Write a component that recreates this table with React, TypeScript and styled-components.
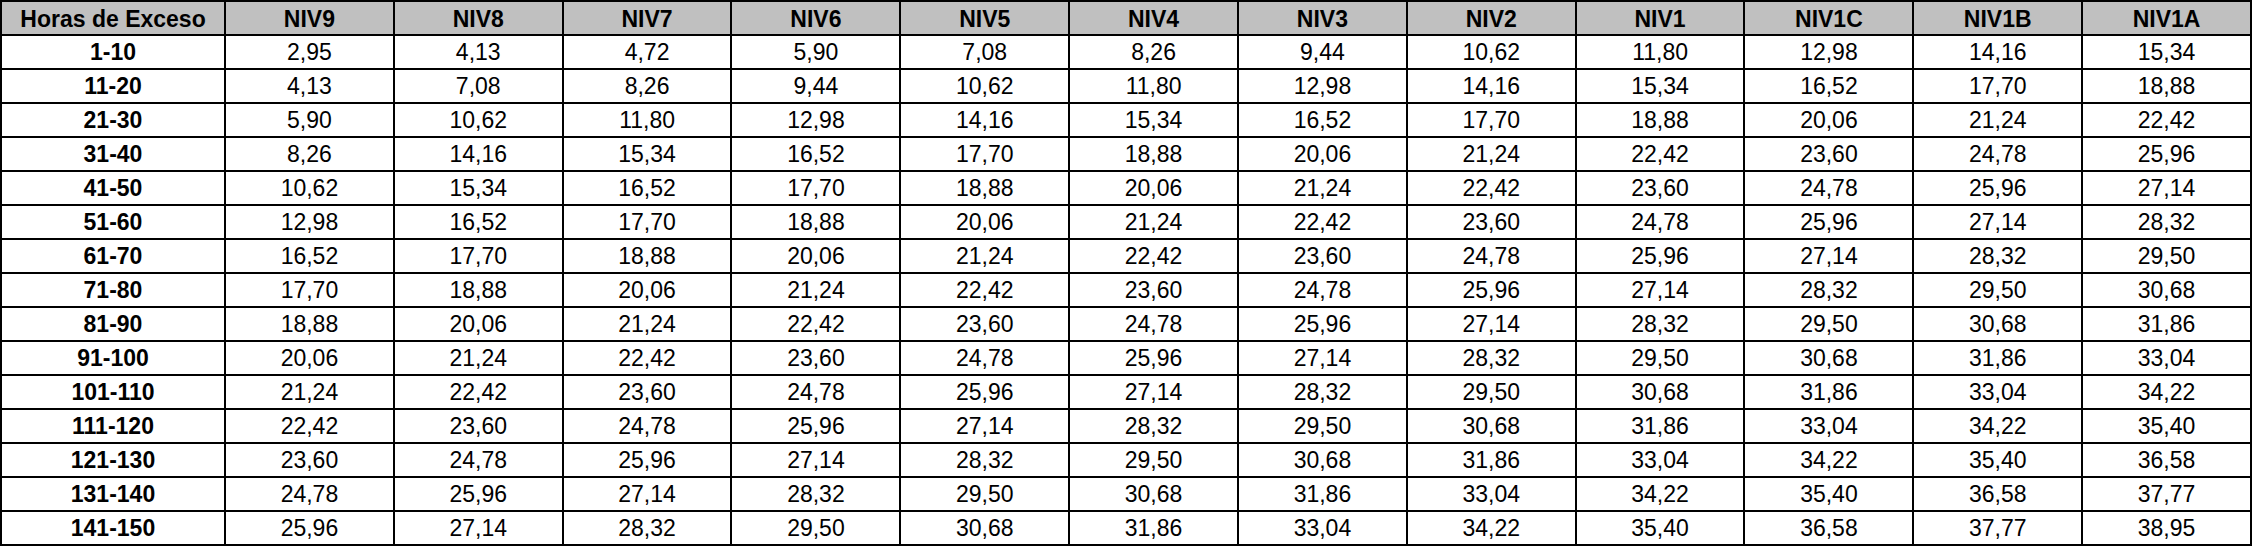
import styled, { createGlobalStyle } from 'styled-components';

const GlobalStyle = createGlobalStyle`
  html, body {
    margin: 0;
    padding: 0;
    background: #ffffff;
  }
`;

const LEVELS = ['NIV9', 'NIV8', 'NIV7', 'NIV6', 'NIV5', 'NIV4', 'NIV3', 'NIV2', 'NIV1', 'NIV1C', 'NIV1B', 'NIV1A'];

// tarifa por hora de exceso, una fila por tramo
const ROWS: [string, string[]][] = [
  ['1-10', ['2,95', '4,13', '4,72', '5,90', '7,08', '8,26', '9,44', '10,62', '11,80', '12,98', '14,16', '15,34']],
  ['11-20', ['4,13', '7,08', '8,26', '9,44', '10,62', '11,80', '12,98', '14,16', '15,34', '16,52', '17,70', '18,88']],
  ['21-30', ['5,90', '10,62', '11,80', '12,98', '14,16', '15,34', '16,52', '17,70', '18,88', '20,06', '21,24', '22,42']],
  ['31-40', ['8,26', '14,16', '15,34', '16,52', '17,70', '18,88', '20,06', '21,24', '22,42', '23,60', '24,78', '25,96']],
  ['41-50', ['10,62', '15,34', '16,52', '17,70', '18,88', '20,06', '21,24', '22,42', '23,60', '24,78', '25,96', '27,14']],
  ['51-60', ['12,98', '16,52', '17,70', '18,88', '20,06', '21,24', '22,42', '23,60', '24,78', '25,96', '27,14', '28,32']],
  ['61-70', ['16,52', '17,70', '18,88', '20,06', '21,24', '22,42', '23,60', '24,78', '25,96', '27,14', '28,32', '29,50']],
  ['71-80', ['17,70', '18,88', '20,06', '21,24', '22,42', '23,60', '24,78', '25,96', '27,14', '28,32', '29,50', '30,68']],
  ['81-90', ['18,88', '20,06', '21,24', '22,42', '23,60', '24,78', '25,96', '27,14', '28,32', '29,50', '30,68', '31,86']],
  ['91-100', ['20,06', '21,24', '22,42', '23,60', '24,78', '25,96', '27,14', '28,32', '29,50', '30,68', '31,86', '33,04']],
  ['101-110', ['21,24', '22,42', '23,60', '24,78', '25,96', '27,14', '28,32', '29,50', '30,68', '31,86', '33,04', '34,22']],
  ['111-120', ['22,42', '23,60', '24,78', '25,96', '27,14', '28,32', '29,50', '30,68', '31,86', '33,04', '34,22', '35,40']],
  ['121-130', ['23,60', '24,78', '25,96', '27,14', '28,32', '29,50', '30,68', '31,86', '33,04', '34,22', '35,40', '36,58']],
  ['131-140', ['24,78', '25,96', '27,14', '28,32', '29,50', '30,68', '31,86', '33,04', '34,22', '35,40', '36,58', '37,77']],
  ['141-150', ['25,96', '27,14', '28,32', '29,50', '30,68', '31,86', '33,04', '34,22', '35,40', '36,58', '37,77', '38,95']],
];

export default function App() {
  return (
    <>
      <GlobalStyle />
      <Table role="table">
        <Cell $head $bold>Horas de Exceso</Cell>
        {LEVELS.map((lvl) => (
          <Cell key={lvl} $head $bold>
            {lvl}
          </Cell>
        ))}
        {ROWS.map(([range, values]) => (
          <Row key={range} role="row">
            <Cell $bold>{range}</Cell>
            {values.map((v, i) => (
              <Cell key={i}>{v}</Cell>
            ))}
          </Row>
        ))}
      </Table>
    </>
  );
}

const Table = styled.div`
  width: 2252px;
  box-sizing: border-box;
  display: grid;
  grid-template-columns: 222px repeat(12, 1fr);
  grid-auto-rows: 32px;
  gap: 2px;
  padding: 2px;
  background: #000000;
  outline: 0;
`;

const Row = styled.div`
  display: contents;
`;

const Cell = styled.div<{ $head?: boolean; $bold?: boolean }>`
  display: flex;
  align-items: center;
  justify-content: center;
  background: ${(p) => (p.$head ? '#c0c0c0' : '#ffffff')};
  color: #000000;
  font-family: 'Liberation Sans', Arial, sans-serif;
  font-size: 23px;
  font-weight: ${(p) => (p.$bold ? 700 : 400)};
  line-height: 1;
  padding-top: ${(p) => (p.$head ? '3px' : '1px')};
  white-space: nowrap;
`;
